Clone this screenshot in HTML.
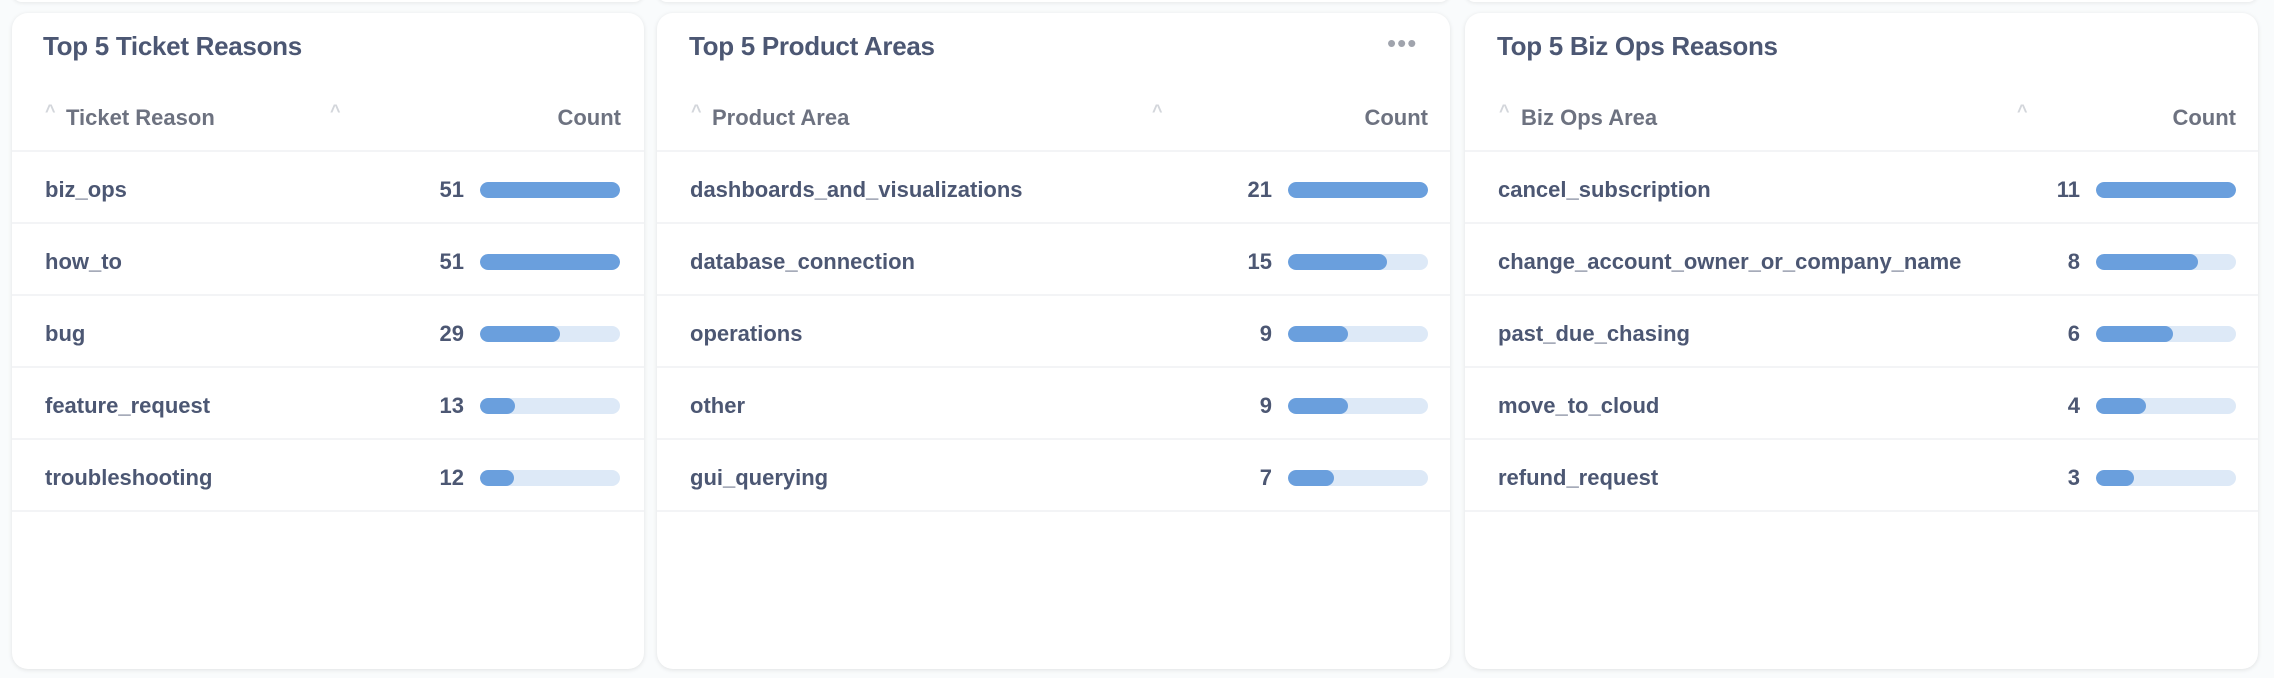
<!DOCTYPE html>
<html><head><meta charset="utf-8"><style>
*{box-sizing:border-box;margin:0;padding:0}
body{width:2274px;height:678px;background:#f9fbfc;font-family:"Liberation Sans",sans-serif;color:#4c5773;position:relative;overflow:hidden}
.top{position:absolute;top:-20px;height:22px;background:#fff;border-radius:10px;box-shadow:0 1px 4px rgba(0,0,0,.08)}
.card{position:absolute;top:13px;height:656px;background:#fff;border-radius:16px;box-shadow:0 1px 5px rgba(0,0,0,.1)}
.title{position:absolute;top:18px;font-size:26px;font-weight:bold;color:#4c5773;letter-spacing:-0.3px}
.hdr{position:absolute;top:0;left:0;right:0;height:139px;border-bottom:2px solid #f3f4f6}
.hl{position:absolute;top:92px;font-size:22px;font-weight:bold;color:#6d7280}
.chev{position:absolute;top:88px;font-size:18px;font-weight:bold;color:#d3d6db}
.row{position:absolute;left:0;right:0;height:72px;border-bottom:2px solid #f3f4f6}
.rl{position:absolute;top:25px;font-size:22px;font-weight:bold;color:#4c5773}
.num{position:absolute;top:25px;font-size:22px;font-weight:bold;text-align:right;width:60px}
.bar{position:absolute;top:30px;width:140px;height:16px;border-radius:8px;background:#dde9f7;overflow:hidden}
.bar i{display:block;height:100%;background:#6a9fdd;border-radius:8px}
.dots{position:absolute;top:15px;font-size:26px;color:#a0a4ad;letter-spacing:1px}
</style></head><body>
<div class="top" style="left:12px;width:632px"></div>
<div class="top" style="left:657px;width:793px"></div>
<div class="top" style="left:1465px;width:793px"></div>

<div class="card" style="left:12px;width:632px">
<div class="title" style="left:31px">Top 5 Ticket Reasons</div>
<div class="hdr"><span class="chev" style="left:33px">^</span><span class="hl" style="left:54px">Ticket Reason</span><span class="chev" style="left:318px">^</span><span class="hl" style="right:23px">Count</span></div>
<div class="row" style="top:139px"><span class="rl" style="left:33px">biz_ops</span><span class="num" style="left:392px">51</span><div class="bar" style="left:468px"><i style="width:100%"></i></div></div>
<div class="row" style="top:211px"><span class="rl" style="left:33px">how_to</span><span class="num" style="left:392px">51</span><div class="bar" style="left:468px"><i style="width:100%"></i></div></div>
<div class="row" style="top:283px"><span class="rl" style="left:33px">bug</span><span class="num" style="left:392px">29</span><div class="bar" style="left:468px"><i style="width:57%"></i></div></div>
<div class="row" style="top:355px"><span class="rl" style="left:33px">feature_request</span><span class="num" style="left:392px">13</span><div class="bar" style="left:468px"><i style="width:25%"></i></div></div>
<div class="row" style="top:427px"><span class="rl" style="left:33px">troubleshooting</span><span class="num" style="left:392px">12</span><div class="bar" style="left:468px"><i style="width:24%"></i></div></div>
</div>

<div class="card" style="left:657px;width:793px">
<div class="title" style="left:32px">Top 5 Product Areas</div>
<div class="dots" style="left:730px">•••</div>
<div class="hdr"><span class="chev" style="left:34px">^</span><span class="hl" style="left:55px">Product Area</span><span class="chev" style="left:495px">^</span><span class="hl" style="right:22px">Count</span></div>
<div class="row" style="top:139px"><span class="rl" style="left:33px">dashboards_and_visualizations</span><span class="num" style="left:555px">21</span><div class="bar" style="left:631px"><i style="width:100%"></i></div></div>
<div class="row" style="top:211px"><span class="rl" style="left:33px">database_connection</span><span class="num" style="left:555px">15</span><div class="bar" style="left:631px"><i style="width:71%"></i></div></div>
<div class="row" style="top:283px"><span class="rl" style="left:33px">operations</span><span class="num" style="left:555px">9</span><div class="bar" style="left:631px"><i style="width:43%"></i></div></div>
<div class="row" style="top:355px"><span class="rl" style="left:33px">other</span><span class="num" style="left:555px">9</span><div class="bar" style="left:631px"><i style="width:43%"></i></div></div>
<div class="row" style="top:427px"><span class="rl" style="left:33px">gui_querying</span><span class="num" style="left:555px">7</span><div class="bar" style="left:631px"><i style="width:33%"></i></div></div>
</div>

<div class="card" style="left:1465px;width:793px">
<div class="title" style="left:32px">Top 5 Biz Ops Reasons</div>
<div class="hdr"><span class="chev" style="left:34px">^</span><span class="hl" style="left:56px">Biz Ops Area</span><span class="chev" style="left:552px">^</span><span class="hl" style="right:22px">Count</span></div>
<div class="row" style="top:139px"><span class="rl" style="left:33px">cancel_subscription</span><span class="num" style="left:555px">11</span><div class="bar" style="left:631px"><i style="width:100%"></i></div></div>
<div class="row" style="top:211px"><span class="rl" style="left:33px">change_account_owner_or_company_name</span><span class="num" style="left:555px">8</span><div class="bar" style="left:631px"><i style="width:73%"></i></div></div>
<div class="row" style="top:283px"><span class="rl" style="left:33px">past_due_chasing</span><span class="num" style="left:555px">6</span><div class="bar" style="left:631px"><i style="width:55%"></i></div></div>
<div class="row" style="top:355px"><span class="rl" style="left:33px">move_to_cloud</span><span class="num" style="left:555px">4</span><div class="bar" style="left:631px"><i style="width:36%"></i></div></div>
<div class="row" style="top:427px"><span class="rl" style="left:33px">refund_request</span><span class="num" style="left:555px">3</span><div class="bar" style="left:631px"><i style="width:27%"></i></div></div>
</div>
</body></html>
